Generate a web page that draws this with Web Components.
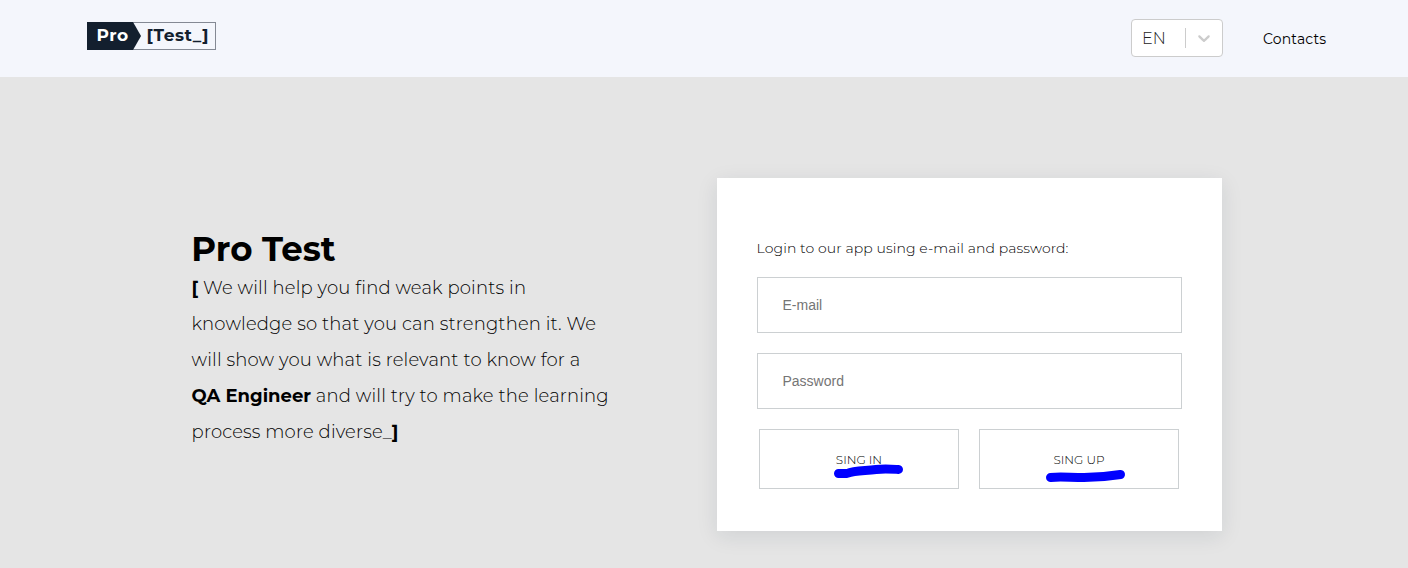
<!DOCTYPE html>
<html lang="en">
<head>
<meta charset="utf-8">
<title>Pro Test</title>
<style>
html,body{margin:0;height:100%;overflow:hidden;background:#e5e5e5}
body{font-family:Montserrat,Inter,sans-serif;color:#000}
</style>
</head>
<body>
<pro-app></pro-app>
<script>
const define = (name, html, ready) => customElements.define(name, class extends HTMLElement {
  connectedCallback() {
    if (this.shadowRoot) return;
    const t = document.createElement('template');
    t.innerHTML = html;
    this.attachShadow({mode: 'open'}).append(t.content.cloneNode(true));
    if (ready) ready(this);
  }
});

define('pro-logo', `<style>
:host{display:flex;box-sizing:border-box;width:129px;height:28px;border:1px solid #848994;font-weight:700;font-size:17px;line-height:26px;color:#131f2e;white-space:nowrap;letter-spacing:.5px}
.p{width:54px;margin:-1px 0 -1px -1px;padding-left:9.500px;box-sizing:border-box;height:28px;line-height:26px;background:#131f2e;color:#fff;clip-path:polygon(0 0,46px 0,54px 50%,46px 100%,0 100%)}
.t{margin:-1px 0 0 5.500px}
</style><div class="p">Pro</div><div class="t">[Test_]</div>`);

define('lang-select', `<style>
:host{display:flex;box-sizing:border-box;width:92px;height:38px;border:1px solid #ccc;border-radius:4px;background:#fff;align-items:center;font-weight:300;font-size:16px;color:#222}
span{box-sizing:border-box;width:53px;padding-left:10px}
i{width:1px;height:20px;background:#ccc;margin-right:8px}
svg{fill:#ccc}
</style><span>EN</span><i></i><svg width="20" height="20" viewBox="0 0 20 20"><path d="M4.516 7.548c0.436-0.446 1.043-0.481 1.576 0l3.908 3.747 3.908-3.747c0.533-0.481 1.141-0.446 1.574 0 0.436 0.445 0.408 1.197 0 1.615-0.406 0.418-4.695 4.502-4.695 4.502-0.217 0.223-0.502 0.335-0.787 0.335s-0.57-0.112-0.789-0.335c0 0-4.287-4.084-4.695-4.502s-0.436-1.17 0-1.615z"/></svg>`);

define('page-header', `<style>
:host{display:flex;box-sizing:border-box;height:77px;background:#f4f6fc;padding:19px 81px 0 87px;align-items:flex-start}
pro-logo{margin-top:3px}
lang-select{margin-left:auto}
nav{width:64px;white-space:nowrap;margin-left:40px;font-size:14px;line-height:38px;font-weight:400;margin-top:1px;letter-spacing:.16px}
</style><pro-logo></pro-logo><lang-select></lang-select><nav>Contacts</nav>`);

define('hero-copy', `<style>
:host{display:block;width:424px}
h1{margin:0 0 0 -.7px;font-size:34px;line-height:42px;font-weight:700}
p{margin:0 0 0 -.4px;font-size:18px;line-height:36px;font-weight:300;letter-spacing:.145px}
b{font-weight:700;letter-spacing:0}
</style><h1>Pro Test</h1>
<p><b>[</b> We will help you find weak points in<br>knowledge so that you can strengthen it. We<br>will show you what is relevant to know for a<br><b>QA Engineer</b> and will try to make the learning<br>process more diverse_<b>]</b></p>`);

define('text-field', `<style>
:host{display:block}
input{display:block;box-sizing:border-box;width:100%;height:56px;border:1px solid #ccd0d2;border-radius:0;padding:0 25px 0 24.500px;background:#fff;font:14px "Liberation Sans",Arial,sans-serif;outline:0}
input::placeholder{color:#757575;opacity:1}
</style><input>`, el => {
  el.shadowRoot.querySelector('input').placeholder = el.getAttribute('label');
});

define('outline-button', `<style>
:host{display:block;position:relative;width:200px;height:60px}
button{display:block;box-sizing:border-box;width:100%;height:100%;background:#fff;border:1px solid #ccd0d2;padding:1px 0 0;font:300 12px/20px Montserrat,Inter,sans-serif;color:#000}
::slotted(svg){position:absolute;left:0;top:0;pointer-events:none;fill:none;stroke:#00f;stroke-width:9px;stroke-linecap:round;stroke-linejoin:round}
</style><button><slot name="label"></slot></button><slot></slot>`);

define('login-card', `<style>
:host{display:flex;flex-direction:column;box-sizing:border-box;width:505px;height:353px;background:#fff;padding:60px 40px 0;box-shadow:0 5px 20px rgba(20,40,55,.1);gap:20px}
.m{font-size:14px;line-height:20px;height:19px;font-weight:300;white-space:nowrap;letter-spacing:.09px;margin-left:-.4px}
.b{display:flex;gap:20px;padding-left:2px}
</style>
<div class="m">Login to our app using e-mail and password:</div>
<text-field label="E-mail"></text-field>
<text-field label="Password"></text-field>
<div class="b">
<outline-button><span slot="label">SING IN</span><svg width="200" height="60"><path d="M79.5 44.5H88C96 41 106 42 117 40.5C125 39.5 131 40 139.500 40.500"/></svg></outline-button>
<outline-button><span slot="label">SING UP</span><svg width="200" height="60"><path d="M71.500 48.500C80 47.500 91 48.500 105 48.500C119 48.500 129 47.500 141.500 45.500"/></svg></outline-button>
</div>`);

define('pro-app', `<style>
:host{display:block;height:568px;overflow:hidden;background:#e5e5e5}
main{display:flex;justify-content:space-between;align-items:flex-start;padding:101px 186px 0 192px}
hero-copy{margin-top:50px}
</style><page-header></page-header><main><hero-copy></hero-copy><login-card></login-card></main>`);
</script>
</body>
</html>
